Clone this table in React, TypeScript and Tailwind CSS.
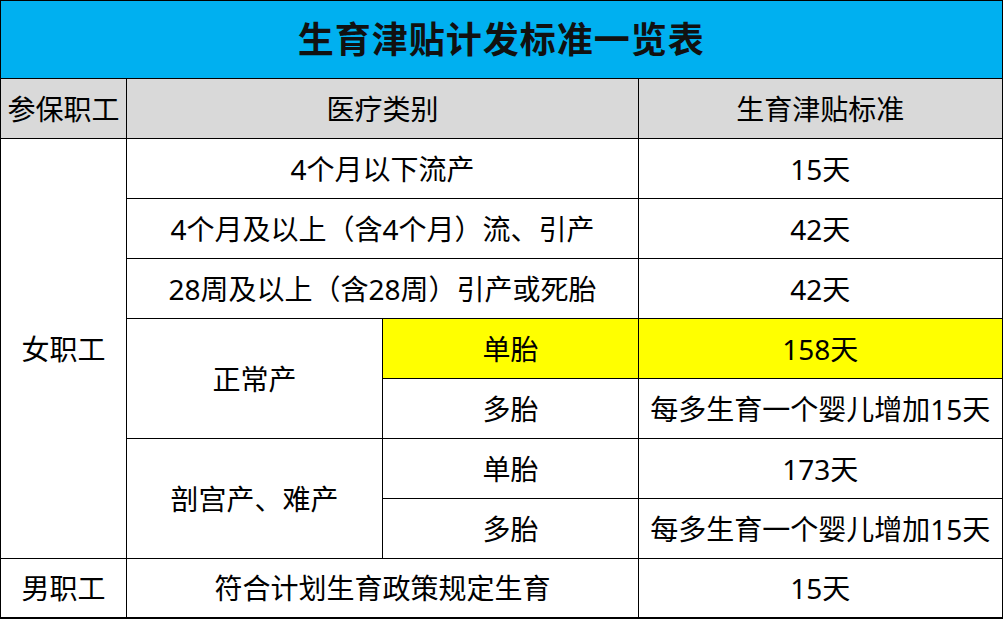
import React from "react";

const font = { fontFamily: '"Noto Sans", "Noto Sans CJK SC", sans-serif' };

export default function App() {
  const td = "border border-black text-center align-middle p-0 text-[28px] text-black font-normal";
  return (
    <div className="w-[1003px] h-[619px] bg-white overflow-hidden" style={font}>
      <table className="table-fixed border-collapse w-[1002px] border-r-2 border-b-2 border-black">
        <colgroup>
          <col className="w-[126px]" />
          <col className="w-[256px]" />
          <col className="w-[256px]" />
          <col className="w-[364px]" />
        </colgroup>
        <tbody>
          <tr className="h-[78px]">
            <td colSpan={4} className="border border-black bg-[#00B0F0] text-center align-middle text-[36px] font-bold text-[#111] tracking-[1px]">
              生育津贴计发标准一览表
            </td>
          </tr>
          <tr className="h-[60px] bg-[#D9D9D9]">
            <td className={td}>参保职工</td>
            <td colSpan={2} className={td}>医疗类别</td>
            <td className={td}>生育津贴标准</td>
          </tr>
          <tr className="h-[60px]">
            <td rowSpan={7} className={td}>女职工</td>
            <td colSpan={2} className={td}>4个月以下流产</td>
            <td className={td}>15天</td>
          </tr>
          <tr className="h-[60px]">
            <td colSpan={2} className={td}>4个月及以上（含4个月）流、引产</td>
            <td className={td}>42天</td>
          </tr>
          <tr className="h-[60px]">
            <td colSpan={2} className={td}>28周及以上（含28周）引产或死胎</td>
            <td className={td}>42天</td>
          </tr>
          <tr className="h-[60px]">
            <td rowSpan={2} className={td}>正常产</td>
            <td className={`${td} bg-[#FFFF00]`}>单胎</td>
            <td className={`${td} bg-[#FFFF00]`}>158天</td>
          </tr>
          <tr className="h-[60px]">
            <td className={td}>多胎</td>
            <td className={td}>每多生育一个婴儿增加15天</td>
          </tr>
          <tr className="h-[60px]">
            <td rowSpan={2} className={td}>剖宫产、难产</td>
            <td className={td}>单胎</td>
            <td className={td}>173天</td>
          </tr>
          <tr className="h-[60px]">
            <td className={td}>多胎</td>
            <td className={td}>每多生育一个婴儿增加15天</td>
          </tr>
          <tr className="h-[59px]">
            <td className={td}>男职工</td>
            <td colSpan={2} className={td}>符合计划生育政策规定生育</td>
            <td className={td}>15天</td>
          </tr>
        </tbody>
      </table>
    </div>
  );
}
